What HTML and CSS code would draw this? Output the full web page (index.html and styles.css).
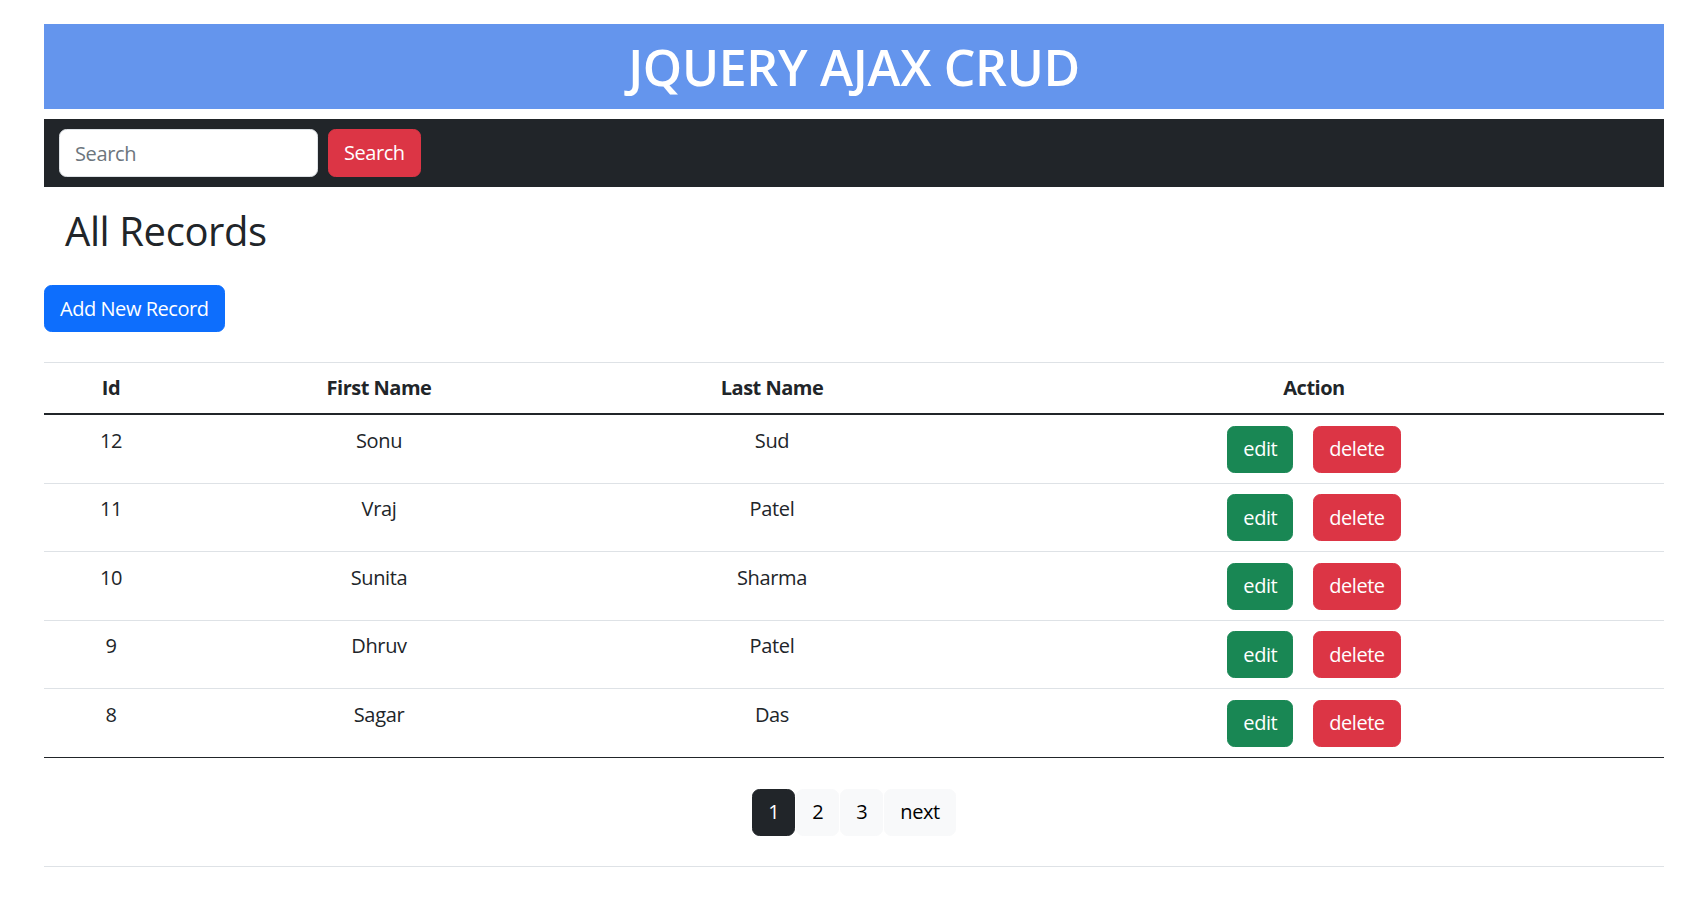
FILE: index.html
```html
<!DOCTYPE html>
<html lang="en">
<head>
<meta charset="utf-8">
<title>JQUERY AJAX CRUD</title>
<link rel="stylesheet" href="styles.css">
</head>
<body>
<div class="page">
  <header class="banner">
    <h1 class="banner-title">JQUERY AJAX CRUD</h1>
  </header>
  <nav class="navbar">
    <form class="search-form">
      <input class="search-input" type="search" placeholder="Search">
      <button class="btn btn-danger" type="button">Search</button>
    </form>
  </nav>
  <h2 class="section-title">All Records</h2>
  <button class="btn btn-primary" type="button">Add New Record</button>
  <table class="records">
    <colgroup>
      <col class="col-id">
      <col class="col-first">
      <col class="col-last">
      <col class="col-action">
    </colgroup>
    <thead>
      <tr><th>Id</th><th>First Name</th><th>Last Name</th><th>Action</th></tr>
    </thead>
    <tbody>
      <tr><td>12</td><td>Sonu</td><td>Sud</td><td><div class="actions"><button class="btn btn-success" type="button">edit</button><button class="btn btn-danger" type="button">delete</button></div></td></tr>
      <tr><td>11</td><td>Vraj</td><td>Patel</td><td><div class="actions"><button class="btn btn-success" type="button">edit</button><button class="btn btn-danger" type="button">delete</button></div></td></tr>
      <tr><td>10</td><td>Sunita</td><td>Sharma</td><td><div class="actions"><button class="btn btn-success" type="button">edit</button><button class="btn btn-danger" type="button">delete</button></div></td></tr>
      <tr><td>9</td><td>Dhruv</td><td>Patel</td><td><div class="actions"><button class="btn btn-success" type="button">edit</button><button class="btn btn-danger" type="button">delete</button></div></td></tr>
      <tr><td>8</td><td>Sagar</td><td>Das</td><td><div class="actions"><button class="btn btn-success" type="button">edit</button><button class="btn btn-danger" type="button">delete</button></div></td></tr>
    </tbody>
  </table>
  <div class="pager">
    <button class="btn btn-dark page-btn" type="button">1</button>
    <button class="btn btn-light page-btn" type="button">2</button>
    <button class="btn btn-light page-btn" type="button">3</button>
    <button class="btn btn-light page-btn" type="button">next</button>
  </div>
</div>
</body>
</html>
```
FILE: styles.css
```css
* {
  box-sizing: border-box;
}

body {
  margin: 0;
  font-family: "Open Sans", "Noto Sans", sans-serif;
  font-size: 20px;
  line-height: 30px;
  color: #212529;
  background: #fff;
  letter-spacing: -0.35px;
}

.page {
  padding: 24px 44px 0;
}

.banner {
  height: 85px;
  background: #6495ed;
  display: flex;
  align-items: center;
  justify-content: center;
}

.banner-title {
  margin: 0;
  font-size: 50px;
  line-height: 60px;
  font-weight: 600;
  color: #fff;
  letter-spacing: -0.3px;
}

.navbar {
  margin-top: 10px;
  background: #212529;
  padding: 10px 15px;
  display: flex;
}

.search-form {
  display: flex;
  align-items: stretch;
  gap: 10px;
}

.search-input {
  width: 259px;
  height: 48px;
  padding: 7.5px 15px;
  border: 1px solid #dee2e6;
  border-radius: 7.5px;
  font-family: inherit;
  font-size: 20px;
  line-height: 30px;
  letter-spacing: -0.35px;
  color: #212529;
  background: #fff;
  outline: none;
}

.search-input::placeholder {
  color: #6c757d;
}

.btn {
  display: inline-block;
  padding: 7.5px 15px;
  border: 1px solid transparent;
  border-radius: 7.5px;
  font-family: inherit;
  font-size: 20px;
  line-height: 30px;
  font-weight: 400;
  letter-spacing: -0.45px;
  text-align: center;
  cursor: pointer;
}

.btn-danger {
  background: #dc3545;
  border-color: #dc3545;
  color: #fff;
}

.btn-primary {
  background: #0d6efd;
  border-color: #0d6efd;
  color: #fff;
}

.btn-success {
  background: #198754;
  border-color: #198754;
  color: #fff;
}

.btn-dark {
  background: #212529;
  border-color: #212529;
  color: #fff;
}

.btn-light {
  background: #f8f9fa;
  border-color: #f8f9fa;
  color: #000;
}

.section-title {
  margin: 20px 0 30px;
  padding-left: 21px;
  font-size: 40px;
  line-height: 48px;
  font-weight: 500;
  letter-spacing: -0.4px;
}

.records {
  margin-top: 30px;
  width: 100%;
  table-layout: fixed;
  border-collapse: collapse;
  border-top: 1px solid #dee2e6;
}

.col-id { width: 134px; }
.col-first { width: 402px; }
.col-last { width: 384px; }
.col-action { width: 700px; }

.records th,
.records td {
  text-align: center;
  vertical-align: top;
}

.records th {
  padding: 10px;
  font-weight: 700;
  letter-spacing: -0.5px;
  border-bottom: 2px solid #212529;
}

.records td {
  padding: 10.5px 10px 10.1px;
  border-bottom: 1px solid #dee2e6;
}

.records tbody tr:last-child td {
  border-bottom: 1px solid #212529;
}

.actions {
  display: flex;
  justify-content: center;
  gap: 20px;
}

.pager {
  padding: 31px 0 30px;
  border-bottom: 1px solid #dee2e6;
  display: flex;
  justify-content: center;
  gap: 1px;
}
```
